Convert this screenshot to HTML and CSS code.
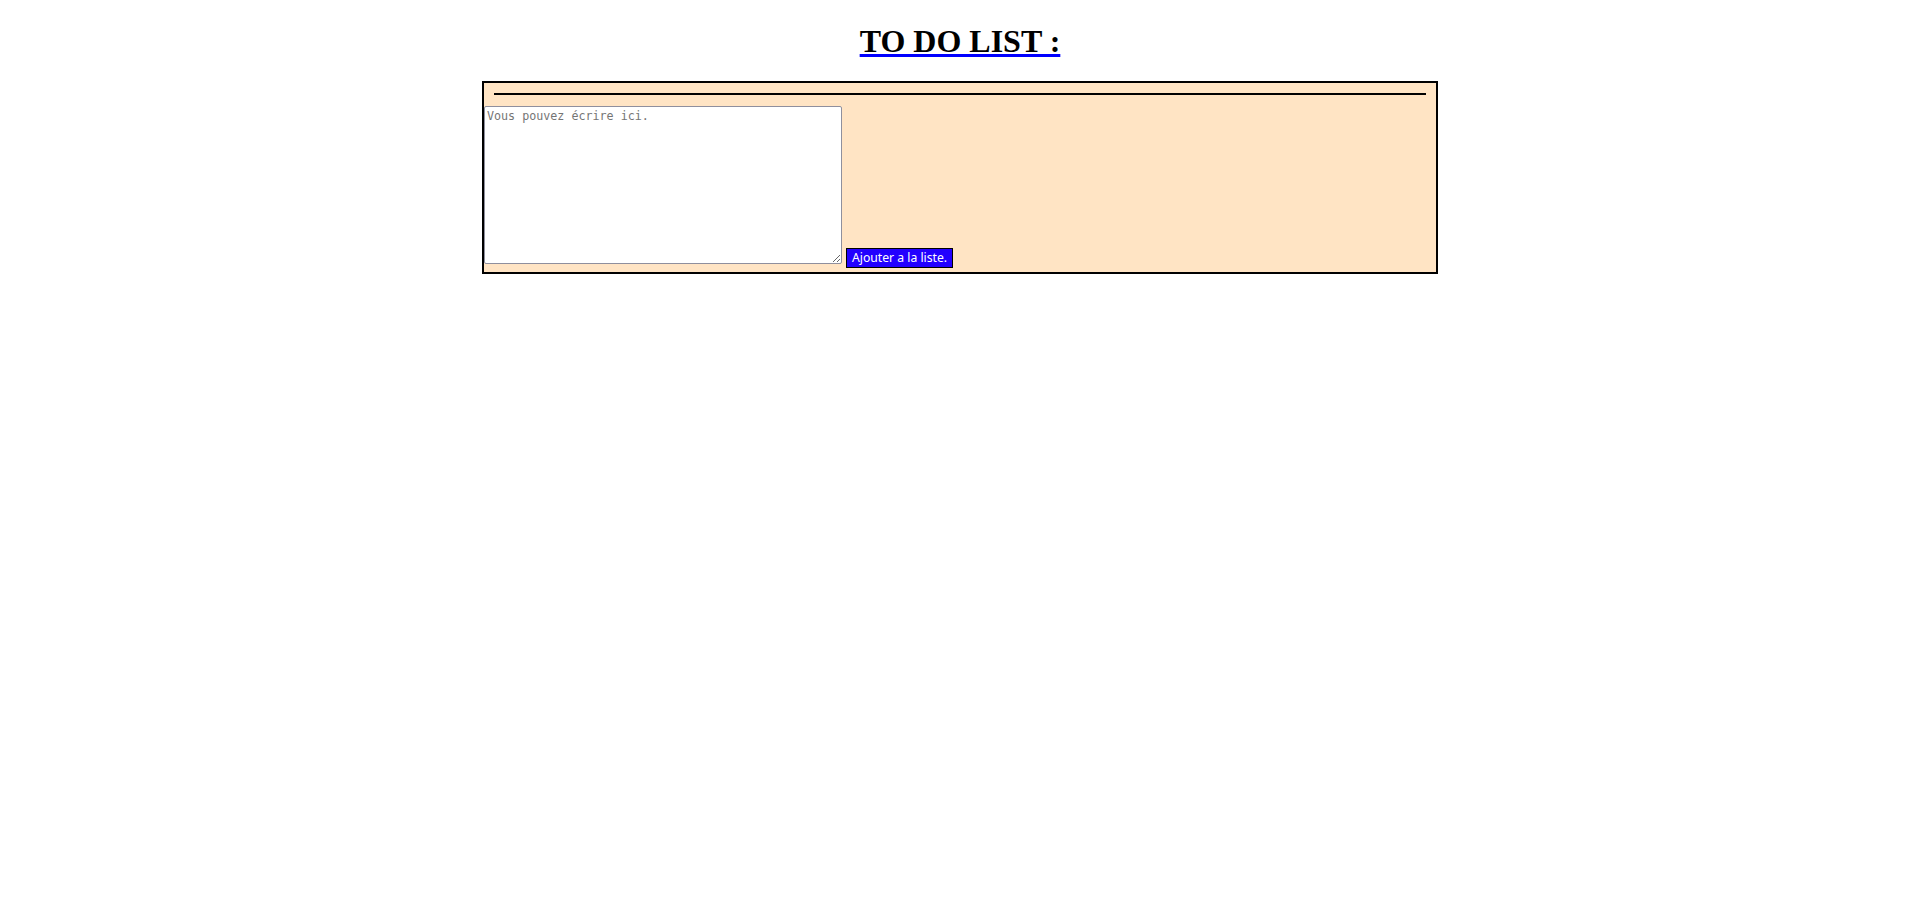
FILE: index.html
```html
<!DOCTYPE html>
<html lang="fr">
<head>
<meta charset="utf-8">
<title>To do list</title>
<link rel="stylesheet" href="styles.css">
</head>
<body>
<h1 class="title">TO DO LIST :</h1>
<div class="panel">
  <hr class="rule">
  <form class="entry"><textarea class="note" placeholder="Vous pouvez écrire ici."></textarea> <button type="button" class="add">Ajouter a la liste.</button></form>
</div>
</body>
</html>
```
FILE: styles.css
```css
body {
  margin: 8px;
  font-family: "Liberation Serif", "Times New Roman", serif;
  background: #fff;
}
.title {
  margin: 15px 0 21px;
  text-align: center;
  font-size: 32px;
  font-weight: bold;
  text-decoration: underline;
  text-decoration-color: #0000ff;
  text-decoration-thickness: 3px;
}
.panel {
  width: 50%;
  margin: 0 auto;
  border: 2px solid #000;
  background: #ffe4c4;
}
.rule {
  margin: 10px 10px 11px;
  border: 0;
  height: 2px;
  background: #000;
}
.entry {
  margin: 0;
  padding-bottom: 3px;
  font-size: 16px;
  line-height: 20px;
}
.note {
  box-sizing: border-box;
  width: 358px;
  height: 158px;
  margin: 0;
  padding: 2px;
  font-family: "DejaVu Sans Mono", monospace;
  font-size: 11.7px;
  border: 1px solid #8f8f9d;
  border-radius: 2px;
  background: #fff;
  vertical-align: baseline;
}
.note::placeholder {
  color: #757575;
}
.add {
  margin: 0;
  padding: 0 5px;
  height: 20px;
  line-height: 18px;
  vertical-align: 2px;
  background: #2200ff;
  color: #fff;
  border: 1px solid #000;
  border-radius: 0;
  font-family: "Noto Sans", "Open Sans", sans-serif;
  font-size: 12.2px;
}
```
